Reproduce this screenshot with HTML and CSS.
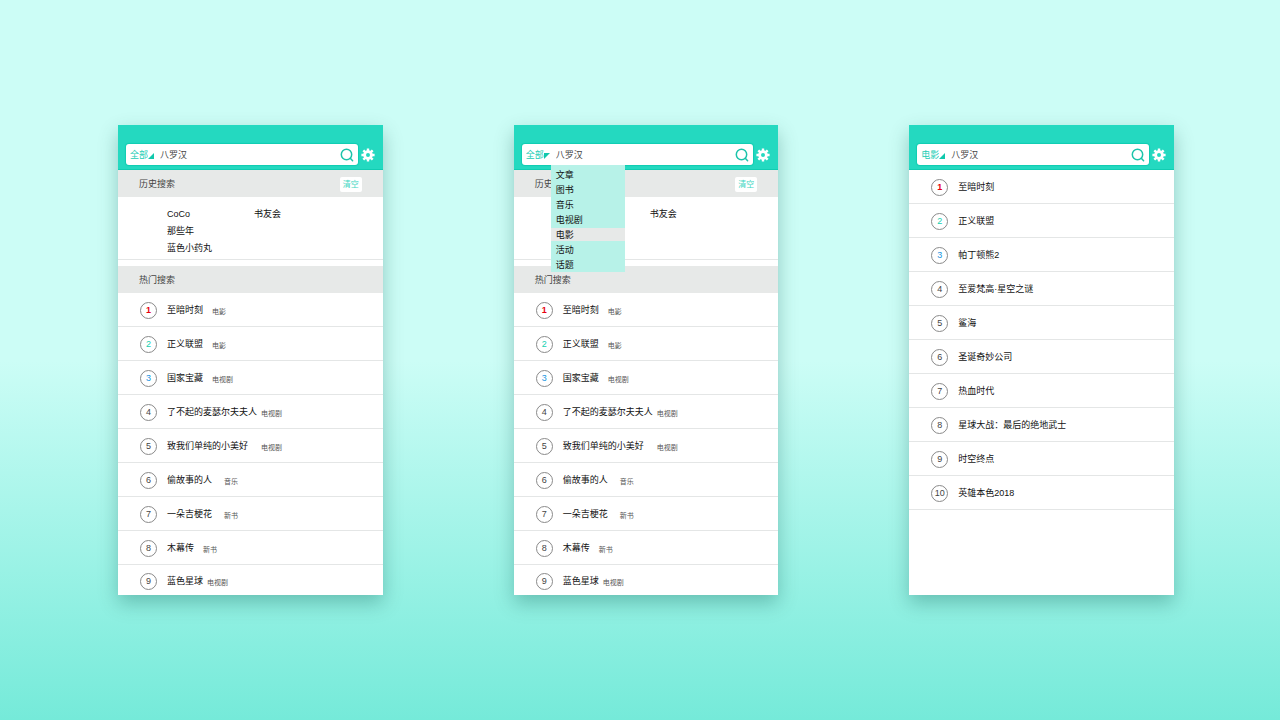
FILE: index.html
```
<!DOCTYPE html>
<html lang="zh-CN">
<head>
  <meta charset="UTF-8">
  <meta name="viewport" content="width=device-width, initial-scale=1.0">
  <title>搜索</title>
  <link rel="stylesheet" href="styles.css">
</head>
<body>
  <svg class="symbols" aria-hidden="true">
    <symbol id="icon-search" viewBox="0 0 14 14">
      <circle cx="6.5" cy="6.5" r="5.2" fill="none" stroke="currentColor" stroke-width="1.5"/>
      <path d="M10.3 10.3 12.6 12.8" fill="none" stroke="currentColor" stroke-width="1.5" stroke-linecap="round"/>
    </symbol>
    <symbol id="icon-gear" viewBox="0 0 14 14">
      <circle cx="7" cy="7" r="3.4" fill="none" stroke="currentColor" stroke-width="2.8"/>
      <path d="M7 .4V3M7 11v2.600M.4 7H3M11 7h2.600M2.300 2.300l1.900 1.900M9.800 9.800l1.900 1.900M2.300 11.700l1.900-1.900M9.800 4.200l1.900-1.900" fill="none" stroke="currentColor" stroke-width="2.400"/>
    </symbol>
    <symbol id="icon-corner" viewBox="0 0 6 6">
      <path d="M6 0v6H0z" fill="currentColor"/>
    </symbol>
    <symbol id="icon-corner-open" viewBox="0 0 6 6">
      <path d="M0 0h6L0 6z" fill="currentColor"/>
    </symbol>
  </svg>

  <main class="screens">
    <section class="screen">
      <header class="header">
        <form class="search">
          <select class="search-type" aria-label="分类">
            <option>全部</option>
          </select>
          <svg class="corner"><use href="#icon-corner"/></svg>
          <input class="search-input" type="text" value="八罗汉" aria-label="搜索">
          <button class="icon-button search-button" type="button" aria-label="搜索"><svg><use href="#icon-search"/></svg></button>
        </form>
        <button class="icon-button" type="button" aria-label="设置"><svg><use href="#icon-gear"/></svg></button>
      </header>

      <div class="bar">
        <h2>历史搜索</h2>
        <button class="clear" type="button">清空</button>
      </div>
      <ul class="history">
        <li>CoCo</li>
        <li class="right">书友会</li>
        <li>那些年</li>
        <li>蓝色小药丸</li>
      </ul>

      <div class="bar">
        <h2>热门搜索</h2>
      </div>
      <ol class="ranking">
        <li><span class="num first">1</span><span class="title">至暗时刻</span><span class="tag">电影</span></li>
        <li><span class="num second">2</span><span class="title">正义联盟</span><span class="tag">电影</span></li>
        <li><span class="num third">3</span><span class="title">国家宝藏</span><span class="tag">电视剧</span></li>
        <li><span class="num">4</span><span class="title">了不起的麦瑟尔夫夫人</span><span class="tag">电视剧</span></li>
        <li><span class="num">5</span><span class="title title-lg">致我们单纯的小美好</span><span class="tag">电视剧</span></li>
        <li><span class="num">6</span><span class="title title-md">偷故事的人</span><span class="tag">音乐</span></li>
        <li><span class="num">7</span><span class="title title-md">一朵吉梗花</span><span class="tag">新书</span></li>
        <li><span class="num">8</span><span class="title title-sm">木幕传</span><span class="tag">新书</span></li>
        <li><span class="num">9</span><span class="title title-sm">蓝色星球</span><span class="tag">电视剧</span></li>
      </ol>
    </section>

    <section class="screen">
      <header class="header">
        <form class="search">
          <select class="search-type" aria-label="分类">
            <option>全部</option>
          </select>
          <svg class="corner"><use href="#icon-corner-open"/></svg>
          <input class="search-input" type="text" value="八罗汉" aria-label="搜索">
          <button class="icon-button search-button" type="button" aria-label="搜索"><svg><use href="#icon-search"/></svg></button>
          <ul class="menu" role="listbox" aria-label="分类">
            <li role="option">文章</li>
            <li role="option">图书</li>
            <li role="option">音乐</li>
            <li role="option">电视剧</li>
            <li role="option" class="active" aria-selected="true">电影</li>
            <li role="option">活动</li>
            <li role="option">话题</li>
          </ul>
        </form>
        <button class="icon-button" type="button" aria-label="设置"><svg><use href="#icon-gear"/></svg></button>
      </header>

      <div class="bar">
        <h2>历史搜索</h2>
        <button class="clear" type="button">清空</button>
      </div>
      <ul class="history">
        <li class="right">书友会</li>
      </ul>

      <div class="bar">
        <h2>热门搜索</h2>
      </div>
      <ol class="ranking">
        <li><span class="num first">1</span><span class="title">至暗时刻</span><span class="tag">电影</span></li>
        <li><span class="num second">2</span><span class="title">正义联盟</span><span class="tag">电影</span></li>
        <li><span class="num third">3</span><span class="title">国家宝藏</span><span class="tag">电视剧</span></li>
        <li><span class="num">4</span><span class="title">了不起的麦瑟尔夫夫人</span><span class="tag">电视剧</span></li>
        <li><span class="num">5</span><span class="title title-lg">致我们单纯的小美好</span><span class="tag">电视剧</span></li>
        <li><span class="num">6</span><span class="title title-md">偷故事的人</span><span class="tag">音乐</span></li>
        <li><span class="num">7</span><span class="title title-md">一朵吉梗花</span><span class="tag">新书</span></li>
        <li><span class="num">8</span><span class="title title-sm">木幕传</span><span class="tag">新书</span></li>
        <li><span class="num">9</span><span class="title title-sm">蓝色星球</span><span class="tag">电视剧</span></li>
      </ol>
    </section>

    <section class="screen">
      <header class="header">
        <form class="search">
          <select class="search-type" aria-label="分类">
            <option>电影</option>
          </select>
          <svg class="corner"><use href="#icon-corner"/></svg>
          <input class="search-input" type="text" value="八罗汉" aria-label="搜索">
          <button class="icon-button search-button" type="button" aria-label="搜索"><svg><use href="#icon-search"/></svg></button>
        </form>
        <button class="icon-button" type="button" aria-label="设置"><svg><use href="#icon-gear"/></svg></button>
      </header>

      <ol class="ranking ranking-full">
        <li><span class="num first">1</span><span class="title">至暗时刻</span></li>
        <li><span class="num second">2</span><span class="title">正义联盟</span></li>
        <li><span class="num third">3</span><span class="title">帕丁顿熊2</span></li>
        <li><span class="num">4</span><span class="title">至爱梵高·星空之谜</span></li>
        <li><span class="num">5</span><span class="title">鲨海</span></li>
        <li><span class="num">6</span><span class="title">圣诞奇妙公司</span></li>
        <li><span class="num">7</span><span class="title">热血时代</span></li>
        <li><span class="num">8</span><span class="title">星球大战：最后的绝地武士</span></li>
        <li><span class="num">9</span><span class="title">时空终点</span></li>
        <li><span class="num">10</span><span class="title">英雄本色2018</span></li>
      </ol>
    </section>
  </main>
</body>
</html>
```
FILE: styles.css
```
* {
  box-sizing: border-box;
}
body {
  margin: 0;
  min-height: 100vh;
  display: flex;
  align-items: center;
  background: linear-gradient(#ccfdf6 0%, #ccfdf6 50%, #75ead9 100%);
  font-family: "Liberation Sans", "Noto Sans CJK SC", sans-serif;
  font-size: 9px;
  line-height: 15px;
  color: #111;
}
ul, ol {
  list-style: none;
  margin: 0;
  padding: 0;
}
button, input, select {
  font: inherit;
  border: 0;
  padding: 0;
  margin: 0;
  background: none;
}
.symbols {
  display: none;
}
.screens {
  flex: 1;
  display: grid;
  grid-template-columns: repeat(3, 1fr);
  gap: 131px;
  padding: 0 106px 0 118px;
}
.screen {
  background: #fff;
  box-shadow: 0 8px 18px rgba(0, 80, 70, 0.3);
}

/* header */
.header {
  display: flex;
  align-items: center;
  gap: 3px;
  padding: 19px 8px 4px;
  background: #24d9c0;
  border-bottom: 1px solid #10cdb2;
}
.search {
  position: relative;
  flex: 1;
  display: flex;
  align-items: center;
  height: 21px;
  padding: 0 4px;
  background: #fff;
  border-radius: 3px;
  box-shadow: 0 0 1px 1px #10cdb2;
}
.search-type {
  appearance: none;
  width: 18px;
  padding-top: 1px;
  color: #22cdb5;
}
.corner {
  width: 6px;
  height: 6px;
  margin-top: 3px;
  color: #10c8ac;
}
.search-input {
  flex: 1;
  min-width: 0;
  padding: 1px 0 0 6px;
  color: #444;
}
.icon-button {
  width: 14px;
  height: 14px;
  color: #fff;
}
.icon-button svg {
  display: block;
  width: 14px;
  height: 14px;
}
.search-button {
  color: #1cc4ab;
}

/* type menu */
.menu {
  position: absolute;
  z-index: 1;
  top: 100%;
  left: 29px;
  width: 74px;
  padding-top: 2px;
  background: #b7f2e8;
}
.menu li {
  height: 15px;
  padding: 1px 0;
  line-height: 14px;
  text-indent: 5px;
}
.menu .active {
  background: #e7e9e8 content-box;
}

/* section bars */
.bar {
  display: flex;
  align-items: center;
  justify-content: space-between;
  height: 27px;
  padding: 2px 21px 0;
  background: #e7e9e8;
}
.bar h2 {
  margin: 0;
  font-size: 9px;
  font-weight: normal;
  color: #444;
}
.clear {
  width: 22px;
  height: 15px;
  border-radius: 2px;
  background: #fff;
  color: #3fd6c2;
  font-size: 8px;
}
.history {
  display: grid;
  grid-template-columns: 87px 1fr;
  grid-template-rows: repeat(3, 17px);
  line-height: 17px;
  padding: 9px 0 2px 49px;
  margin-bottom: 6px;
  border-bottom: 1px solid #e4e6e6;
}
.history li {
  grid-column: 1;
}
.history .right {
  grid-column: 2;
}

/* ranking */
.ranking li {
  display: flex;
  align-items: center;
  height: 34px;
  padding: 2px 0 0 22px;
  border-bottom: 1px solid #e4e6e6;
}
.ranking li:last-child {
  height: 30px;
  border-bottom: 0;
}
.ranking-full li:last-child {
  height: 34px;
  border-bottom: 1px solid #e4e6e6;
}
.num {
  width: 17px;
  height: 17px;
  margin-right: 10px;
  border: 1px solid #8a8a8a;
  border-radius: 50%;
  text-align: center;
  color: #444;
}
.first {
  color: #e60012;
  font-weight: bold;
}
.second {
  color: #14cfb0;
}
.third {
  color: #1a96e0;
}
.title {
  min-width: 41px;
  margin-right: 4px;
}
.title-sm {
  min-width: 32px;
}
.title-md {
  min-width: 53px;
}
.title-lg {
  min-width: 90px;
}
.tag {
  padding-top: 2px;
  font-size: 7px;
  color: #555;
}
```
